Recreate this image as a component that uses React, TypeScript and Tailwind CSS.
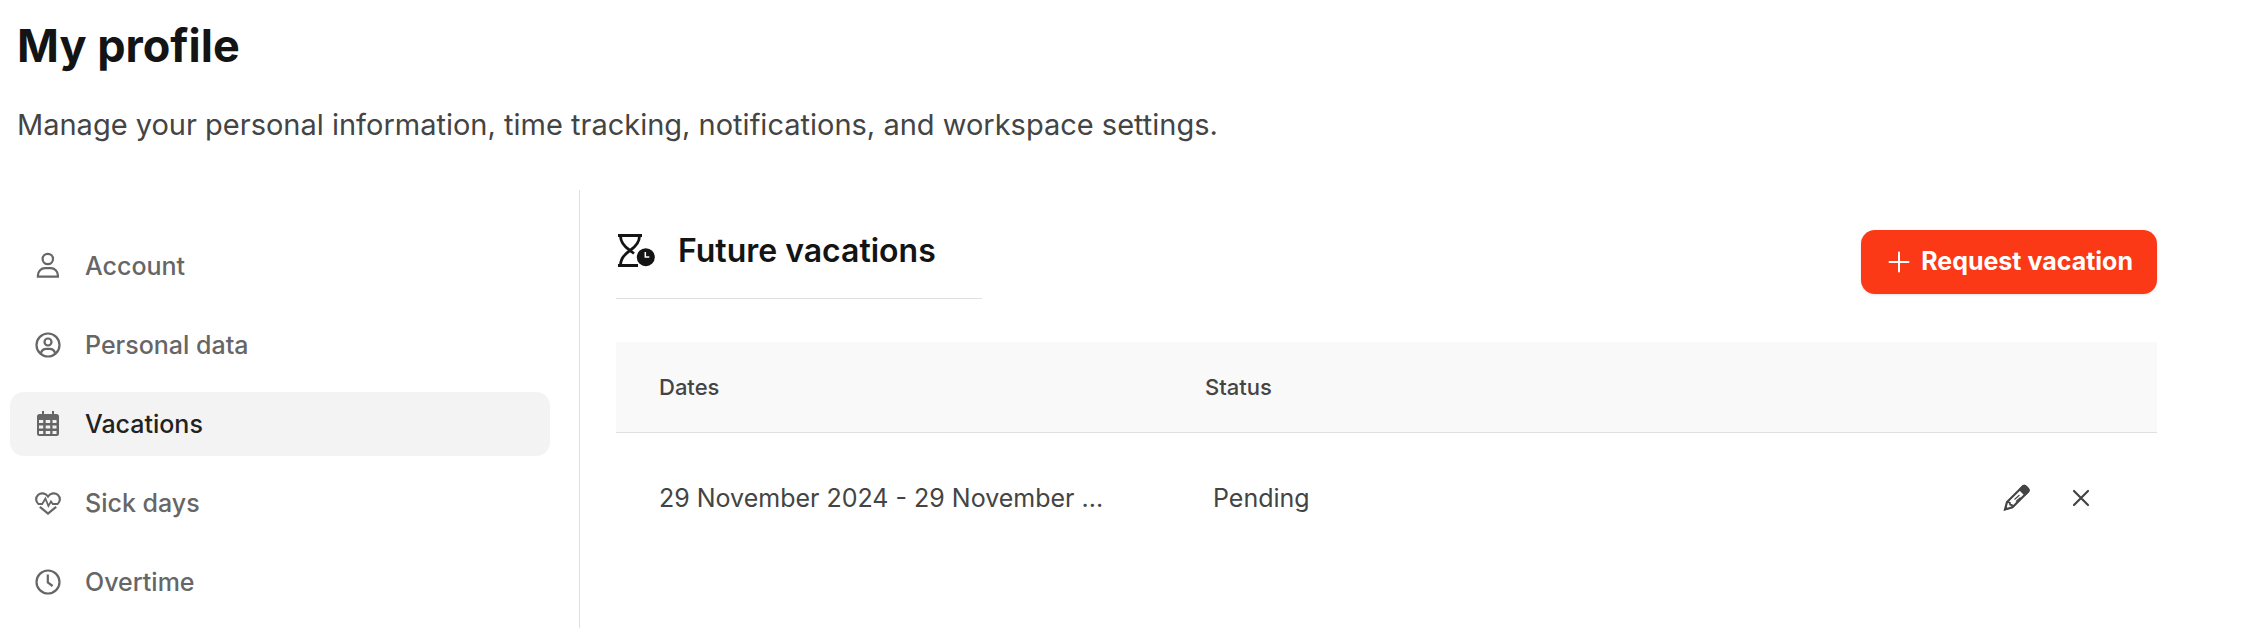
import type { ReactNode } from "react";
import clsx from "clsx";

const iconProps = {
  width: 28,
  height: 28,
  viewBox: "0 0 28 28",
  fill: "none",
  stroke: "currentColor",
  strokeWidth: 2.2,
  "aria-hidden": true,
};

function UserIcon() {
  return (
    <svg {...iconProps}>
      <circle cx="13.8" cy="7" r="5.2" />
      <path d="M3.9 24.7v-1.2c0-4.2 3.3-7.3 7.1-7.3h5.8c3.8 0 7.1 3.1 7.1 7.3v1.2z" />
    </svg>
  );
}

function UserCircleIcon() {
  return (
    <svg {...iconProps}>
      <circle cx="14" cy="14" r="11.5" />
      <circle cx="14" cy="11" r="3.5" />
      <path d="M6.6 22.6c1-3 3.2-4.7 5.6-4.7h3.6c2.4 0 4.6 1.7 5.6 4.7" />
    </svg>
  );
}

function CalendarIcon() {
  return (
    <svg {...iconProps} fill="currentColor" stroke="none">
      <path
        fillRule="evenodd"
        d="M8 1h2v3h8V1h2v3h2.5A2.5 2.5 0 0 1 25 6.5v17a2.5 2.5 0 0 1-2.5 2.5h-17A2.5 2.5 0 0 1 3 23.5v-17A2.5 2.5 0 0 1 5.5 4H8zM5 10v3h4.200v-3zM11.700 10v3h4.500v-3zM18.500 10v3h4v-3zM5 15.500v3h4.200v-3zM11.700 15.500v3h4.500v-3zM18.500 15.500v3h4v-3zM5 21v3h4.200v-3zM11.700 21v3h4.500v-3zM18.500 21v3h4v-3z"
      />
    </svg>
  );
}

function HeartPulseIcon() {
  return (
    <svg {...iconProps} strokeWidth={2.2}>
      <path d="M4.5 15C1.5 12.5 1.4 8.5 4 6 7 3.3 11.5 3.8 14 7.5c2.5-3.7 7-4.2 10-1.5 2.6 2.5 2.5 6.5-.5 9" />
      <path d="M4 15h4.2l3.2-5.5 3 7.5 2.6-4.5 1.8 2.5H24" strokeWidth="1.8" />
      <path d="M5.8 17.8l8.2 6.7 8.2-6.7" />
    </svg>
  );
}

function ClockIcon() {
  return (
    <svg {...iconProps}>
      <circle cx="14" cy="14" r="11.5" />
      <path d="M13.8 6.5v8l4.8 3.5" />
    </svg>
  );
}

function HourglassClockIcon() {
  return (
    <svg width="40" height="36" viewBox="0 0 40 36" fill="none" stroke="currentColor" strokeWidth="2.8" aria-hidden>
      <path d="M2 2.5h24M2 32.5h20" />
      <path d="M4.5 3c0 6 3 10 9.500 14.500C7.500 22 4.500 26 4.500 32M23.500 3c0 6-3 10-9.500 14.500l4 3" />
      <circle cx="29.8" cy="24.2" r="9" fill="currentColor" stroke="none" />
      <path d="M29.3 19v5h4" stroke="white" strokeWidth="1.5" />
    </svg>
  );
}

function PencilIcon() {
  return (
    <svg {...iconProps}>
      <path d="M2 25.5l2-7.5L19.5 2.800a2.500 2.500 0 0 1 3.500 0l1.700 1.700a2.500 2.500 0 0 1 0 3.500L9.500 23.300z" />
      <path d="M17 5.500L19.500 2.800a2.500 2.500 0 0 1 3.500 0l1.700 1.700a2.500 2.500 0 0 1 0 3.500L22 10.500z" fill="currentColor" />
      <path d="M4.500 18l2.300.7.4 2 1.700.3.7 2.300" strokeWidth="1.8" />
      <path d="M11.500 15.500l5-4.500M13 17.500l4.500-4" strokeWidth="1.1" />
      <path d="M1.300 26.500l1.200-4.500 3.200 3.200z" fill="currentColor" stroke="none" />
    </svg>
  );
}

function CloseIcon() {
  return (
    <svg {...iconProps} strokeLinecap="round">
      <path d="M7 7l14 14M21 7L7 21" />
    </svg>
  );
}

function PlusIcon() {
  return (
    <svg {...iconProps} strokeWidth={2} strokeLinecap="round">
      <path d="M14 4.500v19M4.500 14h19" />
    </svg>
  );
}

type MenuItem = {
  label: string;
  icon: ReactNode;
  active?: boolean;
};

const menuItems: MenuItem[] = [
  { label: "Account", icon: <UserIcon /> },
  { label: "Personal data", icon: <UserCircleIcon /> },
  { label: "Vacations", icon: <CalendarIcon />, active: true },
  { label: "Sick days", icon: <HeartPulseIcon /> },
  { label: "Overtime", icon: <ClockIcon /> },
];

const vacations = [
  { id: 1, dates: "29 November 2024 - 29 November ...", status: "Pending" },
];

export default function App() {
  return (
    <div className="flex min-h-screen flex-col bg-white pt-4 font-['Inter',sans-serif] text-[#444]">
      <header className="px-[17px]">
        <h1 className="text-[45px] leading-[60px] font-bold text-[#141414]">My profile</h1>
        <p className="mt-7 text-[29px] leading-[42px]">
          Manage your personal information, time tracking, notifications, and workspace settings.
        </p>
      </header>

      <div className="mt-11 flex flex-1">
        {/* Sidebar */}
        <nav className="flex w-[580px] shrink-0 flex-col gap-[15px] border-r border-[#e0e0e0] pt-11 pr-[29px] pl-[10px]">
          {menuItems.map((item) => (
            <a
              key={item.label}
              href="#"
              aria-current={item.active ? "page" : undefined}
              className={clsx(
                "flex h-16 items-center gap-[23px] rounded-[14px] px-6 text-[25px] font-medium text-[#666]",
                item.active && "bg-[#f3f3f3]"
              )}
            >
              {item.icon}
              <span className={clsx("pt-px", item.active && "text-[#222]")}>{item.label}</span>
            </a>
          ))}
        </nav>

        {/* Content */}
        <main className="min-w-0 flex-1 pt-10 pr-[105px] pl-9">
          <div className="mb-[43px] flex items-start justify-between">
            <div className="flex items-center gap-[22px] border-b border-[#e0e0e0] pr-[46px] pb-[26px] text-[#141414]">
              <HourglassClockIcon />
              <h2 className="text-[32px] leading-[42px] font-semibold">Future vacations</h2>
            </div>
            <button
              type="button"
              className="flex h-16 items-center gap-2 rounded-[14px] bg-[#fb3917] px-6 text-[25px] font-bold text-white shadow-sm"
            >
              <PlusIcon />
              Request vacation
            </button>
          </div>

          <table className="w-full table-fixed text-left">
            <thead>
              <tr className="h-[90px] border-b border-[#e0e0e0] bg-[#f9f9f9] text-[22px]">
                <th className="w-[546px] px-[43px] pt-0.5 font-medium">Dates</th>
                <th className="px-[43px] pt-0.5 font-medium">Status</th>
                <th className="w-60" aria-label="Actions" />
              </tr>
            </thead>
            <tbody>
              {vacations.map((vacation) => (
                <tr key={vacation.id} className="h-[132px] text-[25px]">
                  <td className="pl-[43px] whitespace-nowrap">{vacation.dates}</td>
                  <td className="px-[51px]">{vacation.status}</td>
                  <td>
                    <div className="flex justify-end gap-9 pr-[62px]">
                      <button type="button" aria-label="Edit">
                        <PencilIcon />
                      </button>
                      <button type="button" aria-label="Cancel">
                        <CloseIcon />
                      </button>
                    </div>
                  </td>
                </tr>
              ))}
            </tbody>
          </table>
        </main>
      </div>
    </div>
  );
}
